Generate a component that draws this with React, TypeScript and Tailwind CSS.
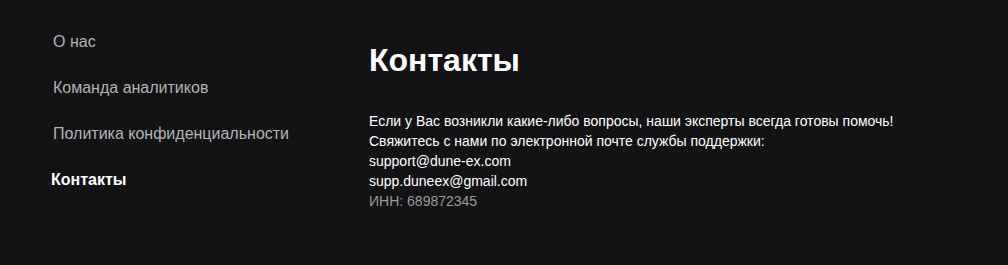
const links = [
  { label: 'О нас', active: false },
  { label: 'Команда аналитиков', active: false },
  { label: 'Политика конфиденциальности', active: false },
  { label: 'Контакты', active: true },
];

export default function App() {
  return (
    <div
      className="min-h-[265px] w-full bg-[#131316] text-white flex"
      style={{ fontFamily: '"Liberation Sans", Arial, sans-serif' }}
    >
      {/* Меню */}
      <nav className="w-[369px] shrink-0 pl-[53px] pt-[33px] flex flex-col gap-[28px]">
        {links.map((l) =>
          l.active ? (
            <a key={l.label} className="-ml-[2px] text-base leading-[18px] font-bold text-white">
              {l.label}
            </a>
          ) : (
            <a key={l.label} className="text-base leading-[18px] text-[#b3b3b3]">
              {l.label}
            </a>
          )
        )}
      </nav>

      {/* Контент */}
      <main className="pt-[40px]">
        <h1 className="text-[32px] leading-[40px] font-bold">Контакты</h1>
        <div className="mt-[31px] text-sm leading-[20px]">
          <p>Если у Вас возникли какие-либо вопросы, наши эксперты всегда готовы помочь!</p>
          <p>Свяжитесь с нами по электронной почте службы поддержки:</p>
          <p>support@dune-ex.com</p>
          <p>supp.duneex@gmail.com</p>
          <p className="text-[#9a9a9a]">ИНН: 689872345</p>
        </div>
      </main>
    </div>
  );
}
